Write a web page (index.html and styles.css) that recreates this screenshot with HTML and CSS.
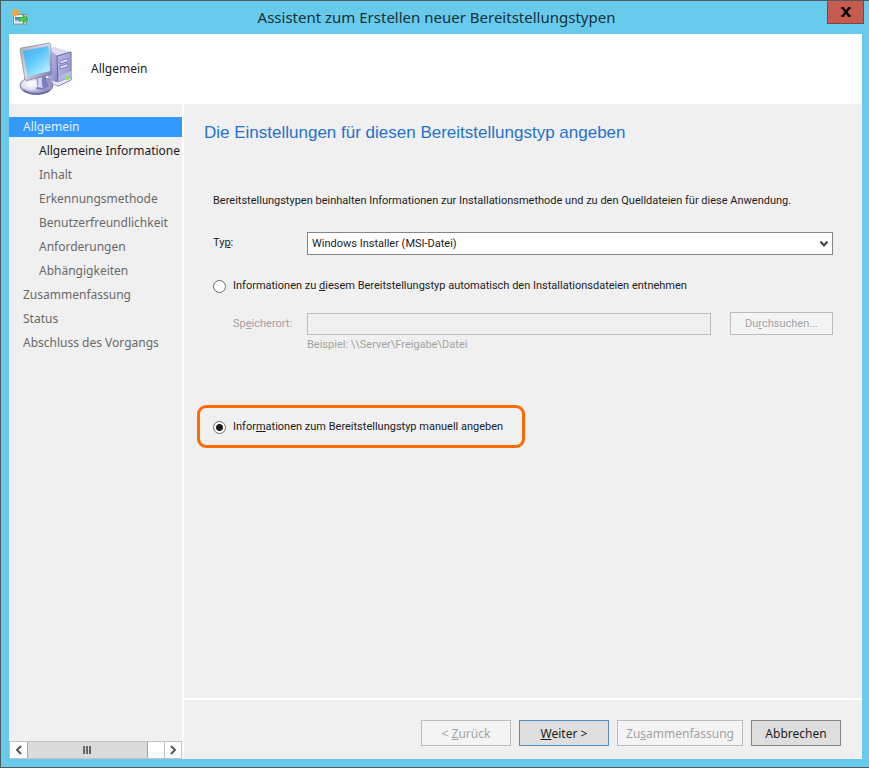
FILE: index.html
```html
<!DOCTYPE html>
<html lang="de">
<head>
<meta charset="utf-8">
<title>Assistent zum Erstellen neuer Bereitstellungstypen</title>
<link rel="stylesheet" href="styles.css">
</head>
<body>
<div class="window">
  <header class="titlebar">
    <svg class="app-icon" viewBox="0 0 18 18" aria-hidden="true">
      <rect x="2.5" y="6.500" width="13" height="9.500" fill="#f3f1ea" stroke="#8c8f92"/>
      <rect x="4" y="9" width="6" height="5" fill="#4a8bd0"/>
      <rect x="4" y="12" width="6" height="2" fill="#a5c8ec"/>
      <path d="M8 9.500h4V6.500l5 4.700-5 4.600v-3H8z" fill="#45cf45" stroke="#259b31" stroke-width=".7"/>
      <path d="M4.500 0l1.200 2 2.200-.6-.6 2.100L9 4.500 7.200 5.600l.6 2.100-2.100-.5L4.500 9l-1.200-1.800-2.100.5.6-2.100L0 4.500l1.800-1-.6-2.100 2.100.6z" fill="#f6a733"/>
    </svg>
    <h1 class="title">Assistent zum Erstellen neuer Bereitstellungstypen</h1>
    <button class="close" type="button" aria-label="Schließen">
      <svg viewBox="0 0 12 10" aria-hidden="true"><path d="M1 1h3.200M7.800 1H11M1 9h3.200M7.800 9H11" stroke="#000" stroke-width="1.600"/><path d="M2.800 1l6.400 8M9.200 1L2.800 9" stroke="#000" stroke-width="2.300"/></svg>
    </button>
  </header>
  <div class="client">
    <div class="banner">
      <svg class="computer" viewBox="0 0 56 54" aria-hidden="true">
        <defs>
          <linearGradient id="screen" x1="0" y1="0" x2=".7" y2="1"><stop offset="0" stop-color="#43a9ee"/><stop offset=".5" stop-color="#5fc8fb"/><stop offset="1" stop-color="#b5f2ff"/></linearGradient>
          <linearGradient id="side" x1="0" y1="0" x2="1" y2="1"><stop offset="0" stop-color="#c9c9ee"/><stop offset="1" stop-color="#7f80c0"/></linearGradient>
          <linearGradient id="front" x1="0" y1="0" x2="1" y2="1"><stop offset="0" stop-color="#b9b9e2"/><stop offset="1" stop-color="#9495ce"/></linearGradient>
          <linearGradient id="frame" x1="0" y1="0" x2="1" y2="1"><stop offset="0" stop-color="#a6a6ad"/><stop offset=".5" stop-color="#dcdce6"/><stop offset="1" stop-color="#6162a4"/></linearGradient>
          <radialGradient id="base" cx=".35" cy=".4"><stop offset="0" stop-color="#fff"/><stop offset=".6" stop-color="#e1e1f0"/><stop offset="1" stop-color="#9a9bc5"/></radialGradient>
        </defs>
        <g transform="translate(-2 2)">
          <path d="M31 5l7-2 16 5-13 5z" fill="#dcdcf2"/>
          <path d="M31 5l10 7v30l-10-5z" fill="url(#side)"/>
          <path d="M40 12l14-4v28l-13 6z" fill="url(#front)" stroke="#6566a7"/>
          <path d="M43 17l8-2.500v3l-8 2.500zM43 22l8-2.500v3l-8 2.500z" fill="#dcdcf4" stroke="#6c6db0" stroke-width=".8"/>
          <path d="M42 32l12-5v9l-13 6z" fill="#b9b9e0"/>
          <path d="M30 35l11 3 13-5v3l-13 6-11-4z" fill="#e8e8f7" stroke="#7778b5" stroke-width=".6"/>
          <circle cx="50.500" cy="34" r="2" fill="#83e65e"/>
        </g>
        <ellipse cx="17.500" cy="43.500" rx="16.500" ry="9" fill="url(#base)" stroke="#7b7cac"/>
        <path d="M4 48q13 8 27 0" fill="none" stroke="#6667a6" stroke-width="1.500"/>
        <path d="M16 35l11-3q-1 6 3 12-6 5-13 3 3-6-1-12z" fill="#7c7cc4"/>
        <path d="M18 36l5-1q-1 6 1 11l-6-1q2-4 0-9z" fill="#d5d5f2"/>
        <path d="M2 6L30 1q1.500 0 1.700 1.500L33 31q0 1.500-1.500 2L8 38.500Q6.500 39 6 37.500L1 8Q1 6.500 2 6z" fill="url(#frame)" stroke="#85869f" stroke-width=".7"/>
        <path d="M4 9l25.500-5 1.500 25L8.500 34.500z" fill="url(#screen)"/>
      </svg>
      <h2 class="step">Allgemein</h2>
    </div>
    <div class="body">
      <aside class="sidebar">
        <nav>
          <ul class="steps">
            <li class="selected"><a href="#allgemein">Allgemein</a></li>
            <li class="sub next"><a href="#infos">Allgemeine Informatione</a></li>
            <li class="sub"><a href="#inhalt">Inhalt</a></li>
            <li class="sub"><a href="#erkennung">Erkennungsmethode</a></li>
            <li class="sub"><a href="#benutzer">Benutzerfreundlichkeit</a></li>
            <li class="sub"><a href="#anforderungen">Anforderungen</a></li>
            <li class="sub"><a href="#abhaengigkeiten">Abhängigkeiten</a></li>
            <li><a href="#zusammenfassung">Zusammenfassung</a></li>
            <li><a href="#status">Status</a></li>
            <li><a href="#abschluss">Abschluss des Vorgangs</a></li>
          </ul>
        </nav>
        <div class="scrollbar">
          <button type="button" aria-label="Nach links"><svg viewBox="0 0 8 10" aria-hidden="true"><path d="M6 1L2 5l4 4"/></svg></button>
          <div class="track"><div class="thumb"><i></i><i></i><i></i></div></div>
          <button type="button" aria-label="Nach rechts"><svg viewBox="0 0 8 10" aria-hidden="true"><path d="M2 1l4 4-4 4"/></svg></button>
        </div>
      </aside>
      <form class="page">
        <div class="content">
          <h3 class="heading">Die Einstellungen für diesen Bereitstellungstyp angeben</h3>
          <div class="fields">
            <p class="intro">Bereitstellungstypen beinhalten Informationen zur Installationsmethode und zu den Quelldateien für diese Anwendung.</p>
            <div class="row">
              <label class="caption" for="typ">Ty<u>p</u>:</label>
              <div class="select">
                <select id="typ"><option>Windows Installer (MSI-Datei)</option></select>
                <svg viewBox="0 0 10 8" aria-hidden="true"><path d="M1.500 1.500L5 5.500l3.500-4"/></svg>
              </div>
            </div>
            <label class="choice"><input type="radio" name="quelle"><span>Informationen zu <u>d</u>iesem Bereitstellungstyp automatisch den Installationsdateien entnehmen</span></label>
            <div class="row location">
              <label class="caption indent" for="ort">Sp<u>e</u>icherort:</label>
              <input class="path" id="ort" type="text" disabled>
              <button class="browse" type="button" disabled>Du<u>r</u>chsuchen...</button>
              <span class="hint">Beispiel: \\Server\Freigabe\Datei</span>
            </div>
            <label class="choice marked"><input type="radio" name="quelle" checked><span>Infor<u>m</u>ationen zum Bereitstellungstyp manuell angeben</span></label>
          </div>
        </div>
        <footer class="actions">
          <button type="button" disabled>&lt; <u>Z</u>urück</button>
          <button class="default" type="button"><span><u>W</u>eiter &gt;</span></button>
          <button class="wide" type="button" disabled>Zu<u>s</u>ammenfassung</button>
          <button type="button">Abbrechen</button>
        </footer>
      </form>
    </div>
  </div>
</div>
</body>
</html>
```
FILE: styles.css
```css
* { box-sizing: border-box; }

body {
  margin: 0;
  font: 12px/18px "Noto Sans", "Segoe UI", sans-serif;
  color: #1c1c1c;
}

h1, h2, h3, p, ul { margin: 0; padding: 0; font-weight: normal; }
button, input, select { margin: 0; font: inherit; color: inherit; }
u { text-underline-offset: 1px; }

.window {
  display: flex;
  flex-direction: column;
  min-height: 100vh;
  padding: 0 5px 8px 8px;
  background: #67caea;
  border: 1px solid #505a60;
  border-right: 0;
}

/* Title bar */
.titlebar {
  display: grid;
  grid-template-columns: 37px 1fr 37px;
  height: 33px;
}
.app-icon { width: 18px; height: 18px; margin: 7px 0 0 2px; }
.title {
  text-align: center;
  font-size: 15px;
  line-height: 32px;
  color: #17303a;
}
.close {
  display: grid;
  place-items: center;
  height: 23px;
  padding: 0;
  background: #c75b50;
  border: 1px solid #7d4644;
  border-top: 0;
}
.close svg { width: 12px; height: 10px; }

.client {
  flex: 1;
  display: flex;
  flex-direction: column;
  margin-right: 2px;
  background: #f0f0f0;
}
.banner {
  display: flex;
  align-items: center;
  gap: 16px;
  height: 70px;
  padding-left: 10px;
  background: #fff;
}
.computer { width: 56px; height: 54px; }
.step { font-size: 12px; line-height: 18px; }

.body {
  flex: 1;
  display: grid;
  grid-template-columns: 175px 1fr;
}

/* Step list */
.sidebar {
  display: flex;
  flex-direction: column;
  justify-content: space-between;
  min-width: 0;
  padding-top: 13px;
  border-right: 2px solid #fff;
}
.steps {
  display: grid;
  gap: 4px;
  list-style: none;
  line-height: 20px;
  color: #696969;
}
.steps li { padding-left: 14px; overflow: hidden; white-space: nowrap; }
.steps .sub { padding-left: 30px; }
.steps .next { color: #1c1c1c; }
.steps .selected { background: #3399ff; color: #e4f1ff; }
.steps a { color: inherit; text-decoration: none; }

.scrollbar { display: flex; height: 18px; background: #fff; border: 1px solid #c2c2c2; }
.scrollbar button {
  display: grid;
  place-items: center;
  width: 17px;
  padding: 0;
  background: #fff;
  border: 0;
}
.scrollbar button:last-child { border-left: 1px solid #c2c2c2; }
.scrollbar svg { width: 8px; height: 10px; fill: none; stroke: #555; stroke-width: 2; }
.track { flex: 1; display: flex; }
.thumb {
  display: flex;
  justify-content: center;
  align-items: center;
  gap: 1px;
  width: 88%;
  background: #dadada;
  border: solid #a6a6a6;
  border-width: 0 1px;
}
.thumb i { width: 2px; height: 8px; background: #666; }

/* Wizard page */
.page { display: flex; flex-direction: column; min-width: 0; }
.content { flex: 1; padding: 17px 29px 0 20px; }
.heading { font: 17px/24px "Liberation Sans", Arial, sans-serif; color: #1f72cf; }
.fields { padding: 48px 0 0 9px; font: 11px/16px Roboto, Arial, sans-serif; }
.intro { margin-bottom: 23px; }
.row { display: grid; grid-template-columns: 94px 1fr; }
.caption { line-height: 22px; }
.indent { padding-left: 20px; }

.select { display: grid; }
.select > * { grid-area: 1 / 1; }
.select select {
  width: 100%;
  height: 23px;
  padding: 0 4px;
  appearance: none;
  background: #fff;
  border: 1px solid #858585;
  border-radius: 0;
}
.select svg {
  justify-self: end;
  align-self: center;
  width: 10px;
  height: 8px;
  margin-right: 4px;
  fill: none;
  stroke: #444;
  stroke-width: 2;
  pointer-events: none;
}

.choice { display: flex; align-items: center; gap: 7px; width: fit-content; margin-top: 23px; }
.choice input {
  width: 13px;
  height: 13px;
  appearance: none;
  background: #fff;
  border: 1px solid #6e6e6e;
  border-radius: 50%;
}
.choice input:checked { background: radial-gradient(circle, #1a1a1a 3px, #fff 4px); }
.marked {
  margin: 52px 0 0 -16px;
  padding: 11px 19px 10px 13px;
  border: 3px solid #ff6a00;
  border-radius: 9px;
}

.location {
  grid-template-columns: 94px 1fr 103px;
  align-items: center;
  margin-top: 18px;
  color: #a3a3a3;
}
.path {
  height: 22px;
  margin-right: 19px;
  min-width: 0;
  background: #f0f0f0;
  border: 1px solid #bcc0c2;
}
.browse {
  height: 23px;
  padding: 0;
  background: #f4f4f4;
  border: 1px solid #b9bdc0;
}
.hint { grid-column: 2; margin-top: 2px; }

.actions {
  display: flex;
  justify-content: flex-end;
  gap: 8px;
  padding: 20px 21px 13px;
  border-top: 2px solid #fff;
}
.actions button {
  width: 90px;
  height: 26px;
  padding: 1px 0 0;
  background: #dedede;
  border: 1px solid #858585;
}
.actions .wide { width: 126px; }
.actions .default { border-color: #4a8fc7; }
.actions button:disabled { color: #a3a3a3; background: #f4f4f4; border-color: #b9bdc0; }
```
